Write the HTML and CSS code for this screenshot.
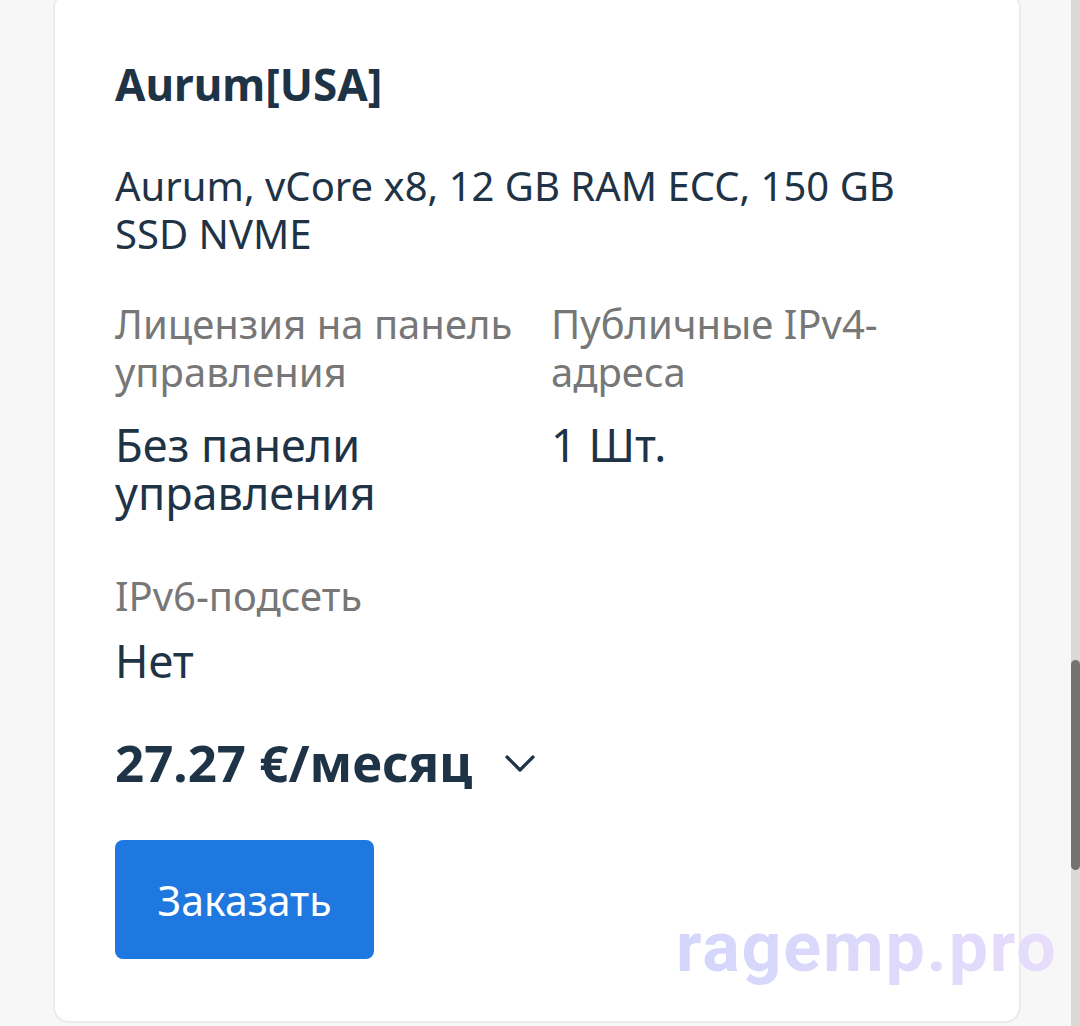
FILE: index.html
```html
<!DOCTYPE html>
<html lang="ru">
<head>
  <meta charset="UTF-8" />
  <meta name="viewport" content="width=device-width, initial-scale=1.0"/>
  <title>Aurum[USA]</title>
  <link rel="stylesheet" href="styles.css">
</head>
<body>
  <div class="page">
    <div class="card">
      <h2 class="title">Aurum[USA]</h2>
      <p class="desc">Aurum, vCore x8, 12 GB RAM ECC, 150 GB SSD NVME</p>

      <div class="params">
        <div class="param">
          <div class="label">Лицензия на панель управления</div>
          <div class="value">Без панели управления</div>
        </div>
        <div class="param">
          <div class="label">Публичные IPv4-адреса</div>
          <div class="value">1 Шт.</div>
        </div>
        <div class="param">
          <div class="label">IPv6-подсеть</div>
          <div class="value">Нет</div>
        </div>
      </div>

      <div class="price">
        <span>27.27 €/месяц</span>
        <svg class="chevron" width="32" height="20" viewBox="0 0 32 20">
          <path d="M3 3 L16 16 L29 3" fill="none" stroke="#1f3347" stroke-width="3.2" stroke-linecap="round" stroke-linejoin="round"/>
        </svg>
      </div>

      <button class="order">Заказать</button>
    </div>
    <div class="watermark">ragemp.pro</div>
  </div>
  <div class="scrollbar">
    <div class="thumb"></div>
  </div>
</body>
</html>
```

FILE: styles.css
```css
* {
  box-sizing: border-box;
  font-family: 'Noto Sans', sans-serif;
}
body {
  background: #f7f7f7;
  color: #1f3347;
  margin: 0;
  display: flex;
  height: 100vh;
  overflow: hidden;
}
.page {
  position: relative;
  flex: 1;
}
.card {
  margin: -8px 0 0 53px;
  width: 968px;
  background: #ffffff;
  border: 2px solid #ebebeb;
  border-radius: 16px;
  padding: 62px 60px 62px 60px;
}
.title {
  margin: 0;
  font-size: 44px;
  font-weight: 700;
  line-height: 56px;
}
.desc {
  margin: 50px 0 0;
  font-size: 40px;
  line-height: 48px;
  max-width: 800px;
}
.params {
  display: grid;
  grid-template-columns: 436px 1fr;
  row-gap: 55px;
  margin-top: 42px;
}
.label {
  color: #777777;
  font-size: 40px;
  line-height: 48px;
  padding-right: 12px;
}
.value {
  font-size: 45px;
  line-height: 48px;
  margin-top: 25px;
}
.param:nth-child(3) .value {
  margin-top: 17px;
}
.price {
  display: flex;
  align-items: center;
  gap: 32px;
  margin-top: 47px;
  font-size: 51px;
  font-weight: 700;
  line-height: 60px;
}
.chevron {
  margin-top: 4px;
}
.order {
  margin-top: 48px;
  width: 259px;
  height: 119px;
  border: none;
  border-radius: 8px;
  background: #1e78e0;
  color: #ffffff;
  font-size: 41px;
  cursor: pointer;
}
.watermark {
  position: absolute;
  left: 676px;
  top: 906px;
  font-family: Roboto, sans-serif;
  font-weight: 700;
  font-size: 70px;
  letter-spacing: 1.8px;
  background: linear-gradient(90deg, #d3d6fb, #e7dcfb);
  -webkit-background-clip: text;
  background-clip: text;
  color: transparent;
}
.scrollbar {
  width: 9px;
  background: #d9d9d9;
  padding-top: 660px;
}
.thumb {
  height: 210px;
  background: #737373;
  border-radius: 5px;
}
```
